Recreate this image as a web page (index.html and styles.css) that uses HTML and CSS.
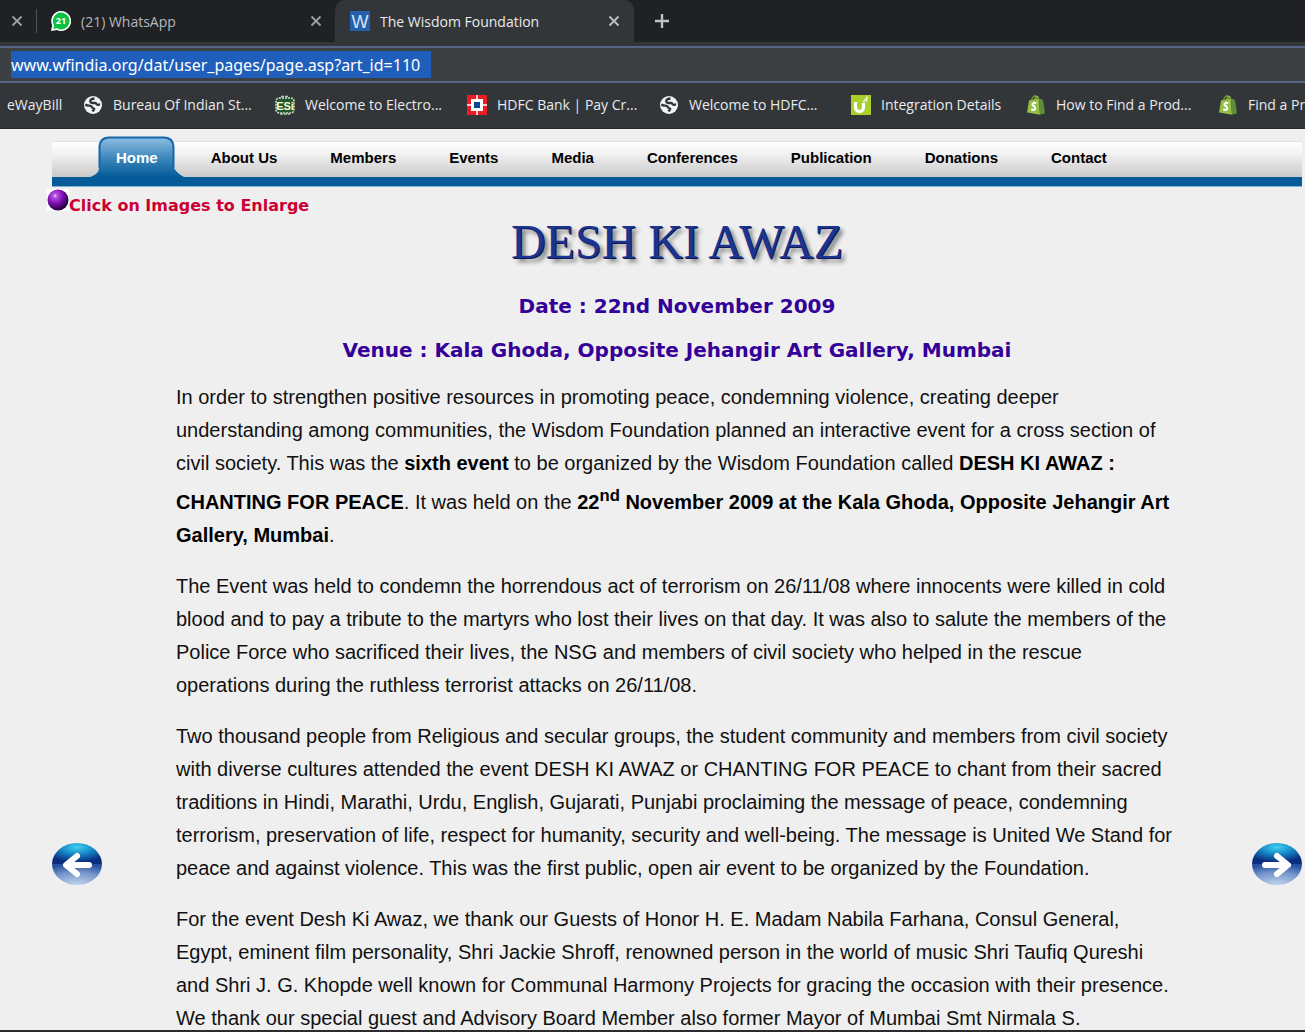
FILE: index.html
```html
<!DOCTYPE html>
<html lang="en">
<head>
<meta charset="utf-8">
<meta name="viewport" content="width=device-width, initial-scale=1">
<title>The Wisdom Foundation</title>
<link rel="stylesheet" href="styles.css">
</head>
<body>
<svg class="symbols" aria-hidden="true">
  <symbol id="close" viewBox="0 0 12 12"><path d="M1.5 1.5l9 9M10.5 1.5l-9 9" stroke="currentColor" stroke-width="1.8" fill="none"/></symbol>
  <symbol id="globe" viewBox="0 0 20 20">
    <circle cx="10" cy="10" r="9" fill="#f1f3f4"/>
    <path d="M11.500 3.500c-2 .2-3.800.8-4.200 2.100-.5 1.500.8 2.300 2.500 2.400h2.400c1.300.2 1.200 1.700 2.400 1.900 1.100.1 1.700-.5 2.500-.7M2.300 9.500c2 1.700 4.200.6 5.600 1.400 1.200.7.8 1.900 2 2.200 1.500.3 1.500.7 1 1.700-.4.800-1.300 1.100-1.600 1.600" fill="none" stroke="#323639" stroke-width="2.300"/>
  </symbol>
  <symbol id="bag" viewBox="0 0 20 20">
    <path d="M3 5.500l10-2.200 1 16.400L1 17.500z" fill="#95bf47"/>
    <path d="M13 3.300l4 1.700 2 13.200-5 1.500z" fill="#5e8e3e"/>
    <path d="M5.500 6C6 2.500 8 .8 9.500 1s2 1.700 2 4M8.500 5C9 2 11 0 12.500 2.500" fill="none" stroke="#7fae3d" stroke-width="1.300"/>
    <path d="M10.300 8.300c-1.700-1-3.800-.5-3.800 1.100 0 1.700 3 1.800 2.800 4-.2 1.800-2.300 1.900-4 .7" fill="none" stroke="#fff" stroke-width="2"/>
  </symbol>
</svg>

<header class="browser">
  <div class="tabs">
    <div class="tab tab-edge">
      <button class="icon-button" aria-label="Close tab"><svg class="close"><use href="#close"/></svg></button>
    </div>
    <div class="tab tab-chat">
      <svg class="icon" viewBox="0 0 20 20">
        <path d="M10 0a10 10 0 1 1-4.200 19L0 20l1.200-5.600A10 10 0 0 1 10 0z" fill="#fff"/>
        <path d="M10 1.600a8.400 8.400 0 1 1-4 15.700l-3.700.6.800-3.500A8.400 8.400 0 0 1 10 1.600z" fill="#0cc143"/>
        <text class="badge-text" x="10" y="13" text-anchor="middle">21</text>
      </svg>
      <span class="tab-title">(21) WhatsApp</span>
      <button class="icon-button" aria-label="Close tab"><svg class="close"><use href="#close"/></svg></button>
    </div>
    <div class="tab tab-active">
      <svg class="icon" viewBox="0 0 20 20">
        <rect width="20" height="20" fill="#2560ad"/>
        <text class="w-text" x="10" y="17" text-anchor="middle">W</text>
      </svg>
      <span class="tab-title">The Wisdom Foundation</span>
      <button class="icon-button" aria-label="Close tab"><svg class="close"><use href="#close"/></svg></button>
    </div>
    <button class="icon-button new-tab" aria-label="New tab"><svg class="plus" viewBox="0 0 16 16"><path d="M8 1v14M1 8h14" stroke="currentColor" stroke-width="2.400"/></svg></button>
  </div>

  <div class="address">
    <input class="address-input" type="text" aria-label="Address" value="www.wfindia.org/dat/user_pages/page.asp?art_id=110">
  </div>

  <nav class="bookmarks" aria-label="Bookmarks">
    <a class="bookmark bookmark-plain" href="#">eWayBill</a>
    <a class="bookmark" href="#"><svg class="icon"><use href="#globe"/></svg>Bureau Of Indian St...</a>
    <a class="bookmark" href="#">
      <svg class="icon" viewBox="0 0 20 20">
        <rect x="1" y="3" width="18" height="15" rx="3" fill="#24552c" stroke="#cfe0cc" stroke-width="1.500" stroke-dasharray="2 1"/>
        <path d="M6 1.500h8M5 19h10" stroke="#b9cdb8" stroke-width="1.500" stroke-dasharray="3 1"/>
        <text class="esi-text" x="10" y="15" text-anchor="middle">ESi</text>
      </svg>Welcome to Electro...</a>
    <a class="bookmark" href="#">
      <svg class="icon" viewBox="0 0 20 20">
        <rect width="20" height="20" fill="#ed1c24"/>
        <path d="M10 0v20M0 10h20" stroke="#fff" stroke-width="1.500"/>
        <rect x="4" y="4" width="12" height="12" fill="#fff"/>
        <rect x="7" y="7" width="6" height="6" fill="#0b4a91"/>
      </svg>HDFC Bank | Pay Cr...</a>
    <a class="bookmark" href="#"><svg class="icon"><use href="#globe"/></svg>Welcome to HDFC...</a>
    <a class="bookmark bookmark-short" href="#">
      <svg class="icon" viewBox="0 0 20 20">
        <rect width="20" height="20" fill="#a8cf2b"/>
        <path d="M4.500 7v5c0 6 8 6 8 0V8" fill="none" stroke="#fff" stroke-width="3.200"/>
        <path d="M12 6.500h2M13.500 4.500h2v2M15 2.500h2" fill="none" stroke="#fff" stroke-width="1.500"/>
      </svg>Integration Details</a>
    <a class="bookmark" href="#"><svg class="icon"><use href="#bag"/></svg>How to Find a Prod...</a>
    <a class="bookmark" href="#"><svg class="icon"><use href="#bag"/></svg>Find a Prod...</a>
  </nav>
</header>

<div class="page">
  <nav class="menu" aria-label="Main">
    <a class="menu-link menu-home" href="#">
      <svg class="home-shape" viewBox="0 0 94 50" aria-hidden="true">
        <defs><linearGradient id="homeFill" x1="0" y1="0" x2="0" y2="1"><stop offset="0" stop-color="#8fbfe2"/><stop offset=".45" stop-color="#3a84ba"/><stop offset=".82" stop-color="#035b98"/></linearGradient></defs>
        <path d="M0 41c6-2 9-5 9-9V9q1-8 9-8h57q8 0 9 8v23c2 4 6 7 10 9v9H0z" fill="url(#homeFill)"/>
        <path d="M9.500 32V10q1-8 9-8.500h56q8 .5 9 8.500v22" fill="none" stroke="#1467a8" stroke-width="2"/>
      </svg>
      <span class="home-label">Home</span>
    </a>
    <a class="menu-link" href="#">About Us</a>
    <a class="menu-link" href="#">Members</a>
    <a class="menu-link" href="#">Events</a>
    <a class="menu-link" href="#">Media</a>
    <a class="menu-link" href="#">Conferences</a>
    <a class="menu-link" href="#">Publication</a>
    <a class="menu-link" href="#">Donations</a>
    <a class="menu-link" href="#">Contact</a>
  </nav>

  <p class="hint">
    <svg class="ball" viewBox="0 0 22 22" aria-hidden="true">
      <defs><radialGradient id="ballFill" cx=".36" cy=".3" r=".7"><stop offset="0" stop-color="#f0c8ff"/><stop offset=".15" stop-color="#b44fe0"/><stop offset=".5" stop-color="#8212b8"/><stop offset="1" stop-color="#23003c"/></radialGradient></defs>
      <rect width="22" height="22" fill="#fff"/>
      <circle cx="11" cy="11" r="10.500" fill="url(#ballFill)"/>
    </svg>
    <span>Click on Images to Enlarge</span>
  </p>

  <div class="columns">
    <button class="arrow" aria-label="Previous">
      <svg class="arrow-art" viewBox="0 0 50 44">
        <defs>
          <radialGradient id="orbTop" cx=".5" cy=".2" r=".7"><stop offset="0" stop-color="#3fd0ee"/><stop offset=".5" stop-color="#1583c4"/><stop offset="1" stop-color="#0a2d80"/></radialGradient>
          <radialGradient id="orbLow" cx=".5" cy="1" r="1"><stop offset="0" stop-color="#c3d6ee"/><stop offset=".6" stop-color="#7595cb"/><stop offset="1" stop-color="#27509f"/></radialGradient>
        </defs>
        <path d="M0 22a25 21 0 0 1 50 0z" fill="url(#orbTop)"/>
        <path d="M0 22a25 21 0 0 0 50 0z" fill="url(#orbLow)"/>
        <path d="M37 23H15M25 14l-11 9 11 9" fill="none" stroke="#fff" stroke-width="6" stroke-linecap="round" stroke-linejoin="round"/>
      </svg>
    </button>

    <main class="article">
      <h1 class="banner">DESH KI AWAZ</h1>
      <h2 class="detail">Date : 22nd November 2009</h2>
      <h2 class="detail">Venue : Kala Ghoda, Opposite Jehangir Art Gallery, Mumbai</h2>
      <p>In order to strengthen positive resources in promoting peace, condemning violence, creating deeper understanding among communities, the Wisdom Foundation planned an interactive event for a cross section of civil society. This was the <b>sixth event</b> to be organized by the Wisdom Foundation called <b>DESH KI AWAZ : CHANTING FOR PEACE</b>. It was held on the <b>22<sup>nd</sup> November 2009 at the Kala Ghoda, Opposite Jehangir Art Gallery, Mumbai</b>.</p>
      <p>The Event was held to condemn the horrendous act of terrorism on 26/11/08 where innocents were killed in cold blood and to pay a tribute to the martyrs who lost their lives on that day. It was also to salute the members of the Police Force who sacrificed their lives, the NSG and members of civil society who helped in the rescue operations during the ruthless terrorist attacks on 26/11/08.</p>
      <p>Two thousand people from Religious and secular groups, the student community and members from civil society with diverse cultures attended the event DESH KI AWAZ or CHANTING FOR PEACE to chant from their sacred traditions in Hindi, Marathi, Urdu, English, Gujarati, Punjabi proclaiming the message of peace, condemning terrorism, preservation of life, respect for humanity, security and well-being. The message is United We Stand for peace and against violence. This was the first public, open air event to be organized by the Foundation.</p>
      <p>For the event Desh Ki Awaz, we thank our Guests of Honor H. E. Madam Nabila Farhana, Consul General, Egypt, eminent film personality, Shri Jackie Shroff, renowned person in the world of music Shri Taufiq Qureshi and Shri J. G. Khopde well known for Communal Harmony Projects for gracing the occasion with their presence. We thank our special guest and Advisory Board Member also former Mayor of Mumbai Smt Nirmala S.</p>
    </main>

    <button class="arrow" aria-label="Next">
      <svg class="arrow-art" viewBox="0 0 50 44">
        <path d="M0 22a25 21 0 0 1 50 0z" fill="url(#orbTop)"/>
        <path d="M0 22a25 21 0 0 0 50 0z" fill="url(#orbLow)"/>
        <path d="M13 23h22M25 14l11 9-11 9" fill="none" stroke="#fff" stroke-width="6" stroke-linecap="round" stroke-linejoin="round"/>
      </svg>
    </button>
  </div>
</div>
</body>
</html>
```

FILE: styles.css
```css
* { box-sizing: border-box; }

body {
  margin: 0;
  height: 100vh;
  display: flex;
  flex-direction: column;
  overflow: hidden;
  background: #efefef;
  border-bottom: 2px solid #2b2a2d;
  font-family: "Liberation Sans", Arial, sans-serif;
  color: #111;
}

button {
  border: 0;
  padding: 0;
  background: none;
  color: inherit;
}

a { color: inherit; text-decoration: none; }

.symbols { display: none; }

/* Browser bars */
.browser {
  flex: none;
  background: #323639;
  border-bottom: 1px solid #2a2a2d;
  color: #e8eaed;
  font-family: "Open Sans", "Noto Sans", sans-serif;
  font-size: 14px;
}

.tabs {
  display: flex;
  height: 42px;
  background: #202124;
}

.tab {
  display: flex;
  align-items: center;
  gap: 10px;
  color: #9aa0a6;
}

.tab-edge { width: 37px; padding-left: 11px; }

.tab-edge::after {
  content: "";
  width: 1px;
  height: 24px;
  margin-left: auto;
  background: #4f5256;
}

.tab-chat { width: 298px; padding: 0 13px 0 14px; }

.tab-active {
  width: 299px;
  padding: 0 14px 0 15px;
  border-radius: 10px 10px 0 0;
  background: #323639;
  color: #e8eaed;
}

.tab-title { flex: 1; white-space: nowrap; }
.tab-chat .tab-title { color: #b4b8bd; }
.tab-active .icon-button { color: #bdc1c6; }

.icon { width: 20px; height: 20px; flex: none; }
.icon-button { display: flex; align-items: center; }
.close { width: 12px; height: 12px; }
.plus { width: 16px; height: 16px; }
.new-tab { margin-left: 20px; color: #bdc1c6; }

.badge-text { font: bold 9px "Open Sans", sans-serif; fill: #fff; }
.w-text { font: 18px "Liberation Sans", sans-serif; fill: #d5e4f5; }
.esi-text { font: bold 11px "Liberation Sans", sans-serif; fill: #f3ffd8; }

.address {
  display: flex;
  height: 37px;
  margin-top: 4px;
  padding: 3px 11px;
  border: solid #566587;
  border-width: 2px 0;
  background: #3c4043;
}

.address-input {
  width: 420px;
  height: 27px;
  padding: 0;
  border: 0;
  background: #1f5fbb;
  color: #fff;
  font-family: "Noto Sans", "Open Sans", sans-serif;
  font-size: 16px;
}

.bookmarks {
  display: flex;
  align-items: center;
  gap: 22px;
  height: 45px;
  padding: 0 0 2px 7px;
  overflow: hidden;
}

.bookmark {
  display: flex;
  flex: none;
  align-items: center;
  gap: 10px;
  width: 170px;
  white-space: nowrap;
}

.bookmark-plain { width: 54px; }
.bookmark-short { width: 153px; }

/* Site */
.page {
  flex: 1;
  min-height: 0;
  overflow: hidden;
  padding: 12px 3px 0 52px;
}

.menu {
  display: flex;
  align-items: center;
  gap: 53px;
  height: 46px;
  padding: 0 64px 14px;
  background: linear-gradient(#fff, #f4f4f4 30%, #c9c9c9) no-repeat 0 0 / 100% 35px, #035b98;
  border-top: 1px solid #e2e2e2;
  border-bottom: 1px solid #7fb0d0;
  font-size: 15px;
  font-weight: bold;
  color: #000;
}

.menu-home { position: relative; color: #fff; }

/* The raised tab lies over the bar and rises above its top edge */
.home-shape {
  position: absolute;
  left: -26px;
  top: -13px;
  width: 94px;
  height: 50px;
}

.home-label { position: relative; }

.hint {
  display: flex;
  align-items: flex-end;
  margin: 1px 0 0 -5px;
  height: 28px;
  font: bold 16px/20px "DejaVu Sans", Verdana, sans-serif;
  color: #cc0033;
}

.ball { width: 22px; height: 22px; margin-bottom: 5px; }

.columns {
  display: flex;
  align-items: flex-start;
  gap: 74px;
}

.arrow { flex: none; margin-top: 626px; }
.arrow-art { display: block; width: 50px; height: 44px; }

.article { flex: 1; min-width: 0; }

.banner {
  margin: 0;
  text-align: center;
  font: 48px/52px "Liberation Serif", "Times New Roman", serif;
  color: #1b3391;
  text-shadow: 1px 1px 0 #10194f, 4px 4px 4px #777;
}

.detail {
  margin: 0;
  text-align: center;
  font: bold 20px/44px "DejaVu Sans", Verdana, sans-serif;
  color: #330099;
}

.banner + .detail { margin-top: 16px; }

.article p {
  margin: 0 0 18px;
  font-size: 20px;
  line-height: 33px;
}

.article sup { line-height: 31px; }

.article b { color: #000; }

.detail + p { margin-top: 9px; }
```
